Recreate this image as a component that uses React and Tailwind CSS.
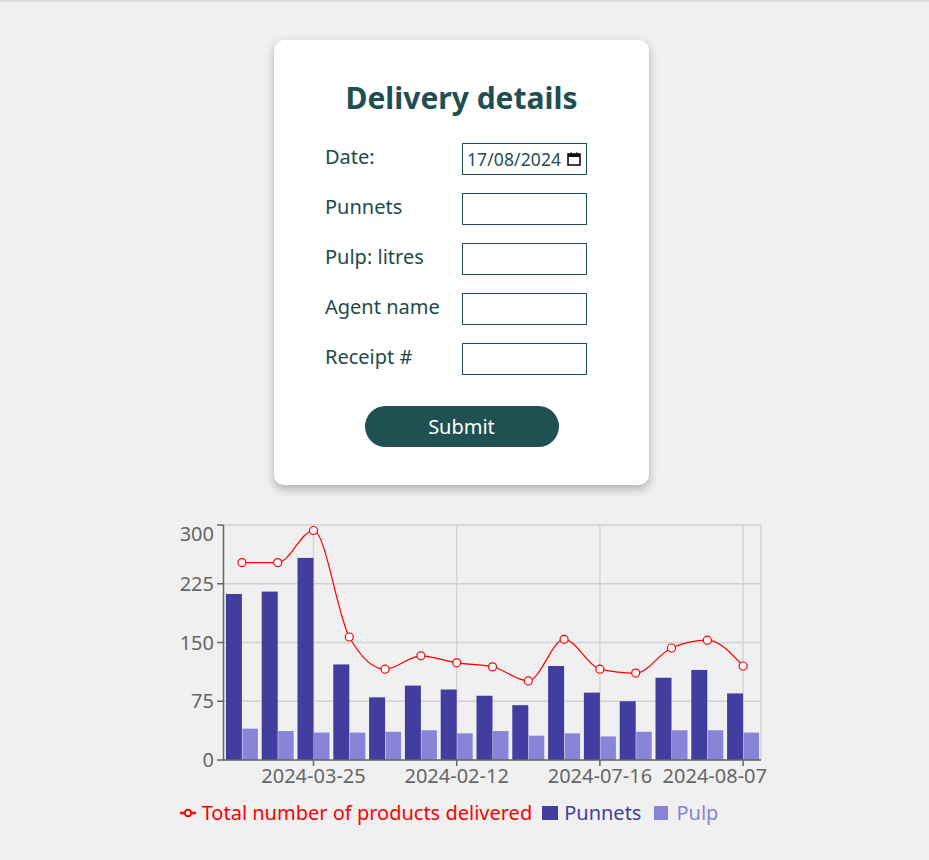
import React from "react";

const punnets = [212, 215, 258, 122, 80, 95, 90, 82, 70, 120, 86, 75, 105, 115, 85];
const pulp = [40, 37, 35, 35, 36, 38, 34, 37, 31, 34, 30, 36, 38, 38, 35];

const X0 = 224;
const X1 = 761;
const Y0 = 760;
const YT = 525;
const BAND = (X1 - X0) / 15;
const SCALE = (Y0 - YT) / 300;
const cx = (i) => X0 + (i + 0.5) * BAND;
const cy = (v) => Y0 - v * SCALE;

function monotonePath(pts) {
  const n = pts.length;
  const s = [];
  for (let i = 0; i < n - 1; i++) {
    s.push((pts[i + 1][1] - pts[i][1]) / (pts[i + 1][0] - pts[i][0]));
  }
  const m = new Array(n).fill(0);
  for (let i = 1; i < n - 1; i++) {
    const h0 = pts[i][0] - pts[i - 1][0];
    const h1 = pts[i + 1][0] - pts[i][0];
    const s0 = s[i - 1];
    const s1 = s[i];
    const p = (s0 * h1 + s1 * h0) / (h0 + h1);
    m[i] = (Math.sign(s0) + Math.sign(s1)) * Math.min(Math.abs(s0), Math.abs(s1), 0.5 * Math.abs(p)) || 0;
  }
  m[0] = (3 * s[0] - m[1]) / 2;
  m[n - 1] = (3 * s[n - 2] - m[n - 2]) / 2;
  let d = `M${pts[0][0]},${pts[0][1]}`;
  for (let i = 0; i < n - 1; i++) {
    const dx = (pts[i + 1][0] - pts[i][0]) / 3;
    d += `C${pts[i][0] + dx},${pts[i][1] + dx * m[i]},${pts[i + 1][0] - dx},${pts[i + 1][1] - dx * m[i + 1]},${pts[i + 1][0]},${pts[i + 1][1]}`;
  }
  return d;
}

function Chart() {
  const pts = punnets.map((p, i) => [cx(i), cy(p + pulp[i])]);
  const yTicks = [0, 75, 150, 225, 300];
  const xTicks = [
    { i: 2, label: "2024-03-25" },
    { i: 6, label: "2024-02-12" },
    { i: 10, label: "2024-07-16" },
    { i: 14, label: "2024-08-07" },
  ];
  return (
    <svg width="929" height="290" viewBox="0 510 929 290" className="block">
      <g stroke="#d2d2d2" strokeWidth="1.3" fill="none">
        {[75, 150, 225, 300].map((v) => (
          <line key={v} x1={X0} x2={X1} y1={cy(v)} y2={cy(v)} />
        ))}
        {xTicks.map((t) => (
          <line key={t.i} x1={cx(t.i)} x2={cx(t.i)} y1={YT} y2={Y0} />
        ))}
        <line x1={X1} x2={X1} y1={YT} y2={Y0} />
      </g>
      {punnets.map((p, i) => (
        <g key={i}>
          <rect x={cx(i) - 16} y={cy(p)} width="16" height={Y0 - cy(p)} fill="#413ea0" />
          <rect x={cx(i) + 0.5} y={cy(pulp[i])} width="15.5" height={Y0 - cy(pulp[i])} fill="#8884d8" />
        </g>
      ))}
      <g stroke="#666" strokeWidth="1.5" fill="none">
        <line x1={223.5} x2={223.5} y1={YT} y2={Y0} />
        <line x1={223} x2={X1} y1={760} y2={760} />
        {yTicks.map((v) => (
          <line key={v} x1={217} x2={223.5} y1={cy(v)} y2={cy(v)} />
        ))}
        {xTicks.map((t) => (
          <line key={t.i} x1={cx(t.i)} x2={cx(t.i)} y1={760} y2={766} />
        ))}
      </g>
      <g fill="#666" fontFamily="'Noto Sans', sans-serif" fontSize="20">
        {yTicks.map((v) => (
          <text key={v} x={214} y={(v === 300 ? 534 : cy(v)) + 7} textAnchor="end">
            {v}
          </text>
        ))}
        {xTicks.map((t) => (
          <text
            key={t.i}
            x={t.i === 14 ? 767 : cx(t.i)}
            y={783}
            textAnchor={t.i === 14 ? "end" : "middle"}
          >
            {t.label}
          </text>
        ))}
      </g>
      <path d={monotonePath(pts)} fill="none" stroke="#ff0000" strokeWidth="1.2" />
      {pts.map(([x, y], i) => (
        <circle key={i} cx={x} cy={y} r="4" fill="#fff" stroke="#ff0000" strokeWidth="1.2" />
      ))}
    </svg>
  );
}

function Field({ label, children }) {
  return (
    <div className="flex items-start">
      <div className="w-[137px] leading-[27px]">{label}</div>
      {children}
    </div>
  );
}

function TextBox() {
  return <input type="text" className="w-[125px] h-[32px] border border-[#1f4f52] bg-white outline-none" />;
}

export default function App() {
  return (
    <div
      className="min-h-[860px] bg-[#f0f0f0] border-t-2 border-[#dce1df]"
      style={{ fontFamily: "'Noto Sans', sans-serif" }}
    >
      <div className="pt-[38px] pl-[274px]">
        <div className="w-[375px] h-[445px] bg-white rounded-[10px] shadow-[0_4px_10px_rgba(0,0,0,0.28)] pt-[38px] text-[#1f4f52]">
          <h1 className="text-center text-[30px] leading-[40px] font-bold text-[#1f4f52]">Delivery details</h1>
          <div className="mt-[25px] pl-[51px] flex flex-col gap-[18px] text-[20px] text-[#23494b]">
            <Field label="Date:">
              <div className="w-[125px] h-[32px] border border-[#1f4f52] bg-white flex items-center pl-[4px] pr-[4px] justify-between">
                <span className="text-[17.5px] text-[#1f4f52] tracking-[0.1px]">17/08/2024</span>
                <svg width="14" height="14" viewBox="0 0 14 14" className="mr-[1px]">
                  <rect x="1" y="2" width="12" height="11" fill="none" stroke="#111" strokeWidth="1.6" />
                  <rect x="1" y="2" width="12" height="3" fill="#111" />
                  <rect x="3.5" y="0.5" width="1.5" height="2" fill="#111" />
                  <rect x="9" y="0.5" width="1.5" height="2" fill="#111" />
                </svg>
              </div>
            </Field>
            <Field label="Punnets">
              <TextBox />
            </Field>
            <Field label="Pulp: litres">
              <TextBox />
            </Field>
            <Field label="Agent name">
              <TextBox />
            </Field>
            <Field label="Receipt #">
              <TextBox />
            </Field>
          </div>
          <div className="mt-[31px] flex justify-center">
            <button className="w-[194px] h-[41px] rounded-full bg-[#1f5052] text-white text-[20px] leading-none">
              Submit
            </button>
          </div>
        </div>
      </div>
      <div className="mt-[25px]">
        <Chart />
      </div>
      <div className="h-[25px] flex items-center justify-center pr-[31px] text-[20px] leading-[25px]">
        <div className="flex items-center mr-[10px]">
          <svg width="16" height="14" viewBox="0 0 16 14" className="mr-[6px]">
            <line x1="0" x2="16" y1="7" y2="7" stroke="#ff0000" strokeWidth="2.5" />
            <circle cx="8" cy="7" r="3.2" fill="#fff" stroke="#ff0000" strokeWidth="2" />
          </svg>
          <span className="text-[#ff0000]">Total number of products delivered</span>
        </div>
        <div className="flex items-center mr-[13px]">
          <span className="w-[16px] h-[14px] bg-[#413ea0] mr-[6px]" />
          <span className="text-[#413ea0]">Punnets</span>
        </div>
        <div className="flex items-center">
          <span className="w-[14px] h-[14px] bg-[#8884d8] mr-[8px]" />
          <span className="text-[#8884d8]">Pulp</span>
        </div>
      </div>
    </div>
  );
}
